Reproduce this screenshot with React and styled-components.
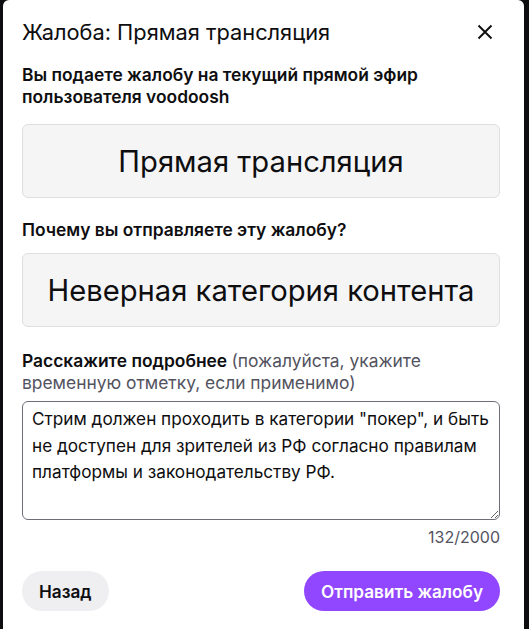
import React, { useState } from 'react'
import styled, { createGlobalStyle } from 'styled-components'

const Global = createGlobalStyle`
  html, body {
    margin: 0;
    padding: 0;
    background: #0e0e10;
    height: 100%;
  }
  body {
    font-family: Inter, "Noto Sans", sans-serif;
    color: #0e0e10;
  }
  * { box-sizing: border-box; }
`

const Modal = styled.div`
  margin: 0 5px 0 3px;
  min-height: 640px;
  background: #fff;
  border-radius: 6px;
  padding: 20px 24px 0 19px;
  display: flex;
  flex-direction: column;
`

const Header = styled.div`
  display: flex;
  align-items: center;
  justify-content: space-between;
  height: 24px;
  margin-bottom: 20px;
`

const Title = styled.h2`
  margin: 0;
  font-size: 21.8px;
  font-weight: 400;
  line-height: 24px;
`

const CloseButton = styled.button`
  border: none;
  background: none;
  padding: 0;
  width: 30px;
  height: 30px;
  display: flex;
  align-items: center;
  justify-content: center;
  color: #0e0e10;
  cursor: pointer;
`

const Label = styled.p`
  margin: ${p => p.$top || 0}px 0 0;
  font-size: 17.4px;
  font-weight: 600;
  line-height: 22px;
  span {
    font-weight: 400;
    color: #53535f;
  }
`

const Choice = styled.div`
  margin-top: ${p => p.$top}px;
  height: 74px;
  border: 1px solid #dedee3;
  border-radius: 6px;
  background: #f5f5f5;
  display: flex;
  align-items: center;
  justify-content: center;
  font-size: 29.2px;
  font-weight: 400;
`

const TextArea = styled.textarea`
  margin-top: 7px;
  height: 119px;
  width: 100%;
  border: 1px solid #6e6e78;
  border-radius: 6px;
  padding: 4px 6px 4px 9px;
  font-family: Inter, "Noto Sans", sans-serif;
  font-size: 17.2px;
  line-height: 26.5px;
  color: #0e0e10;
  resize: vertical;
  outline: none;
`

const Counter = styled.div`
  text-align: right;
  font-size: 16px;
  color: #53535f;
  margin-top: 7px;
`

const Footer = styled.div`
  display: flex;
  justify-content: space-between;
  margin-top: 24px;
`

const Button = styled.button`
  height: 40px;
  border: none;
  border-radius: 20px;
  padding: 0 17px;
  font-family: Inter, "Noto Sans", sans-serif;
  font-size: 17.2px;
  font-weight: 600;
  cursor: pointer;
  background: ${p => (p.$primary ? '#9147ff' : '#efeff1')};
  color: ${p => (p.$primary ? '#fff' : '#0e0e10')};
`

const XIcon = () => (
  <svg width="16" height="16" viewBox="0 0 16 16">
    <path d="M1.5 1.5 L14.5 14.5 M14.5 1.5 L1.5 14.5" stroke="currentColor" strokeWidth="1.9" />
  </svg>
)

export default function App() {
  const [text, setText] = useState(
    'Стрим должен проходить в категории "покер", и быть не доступен для зрителей из РФ согласно правилам платформы и законодательству РФ.'
  )

  return (
    <>
      <Global />
      <Modal>
        <Header>
          <Title>Жалоба: Прямая трансляция</Title>
          <CloseButton aria-label="Закрыть">
            <XIcon />
          </CloseButton>
        </Header>
        <Label>Вы подаете жалобу на текущий прямой эфир пользователя voodoosh</Label>
        <Choice $top={16}>Прямая трансляция</Choice>
        <Label $top={21}>Почему вы отправляете эту жалобу?</Label>
        <Choice $top={12}>Неверная категория контента</Choice>
        <Label $top={23}>
          Расскажите подробнее <span>(пожалуйста, укажите временную отметку, если применимо)</span>
        </Label>
        <TextArea value={text} onChange={e => setText(e.target.value)} />
        <Counter>{text.length}/2000</Counter>
        <Footer>
          <Button>Назад</Button>
          <Button $primary>Отправить жалобу</Button>
        </Footer>
      </Modal>
    </>
  )
}
